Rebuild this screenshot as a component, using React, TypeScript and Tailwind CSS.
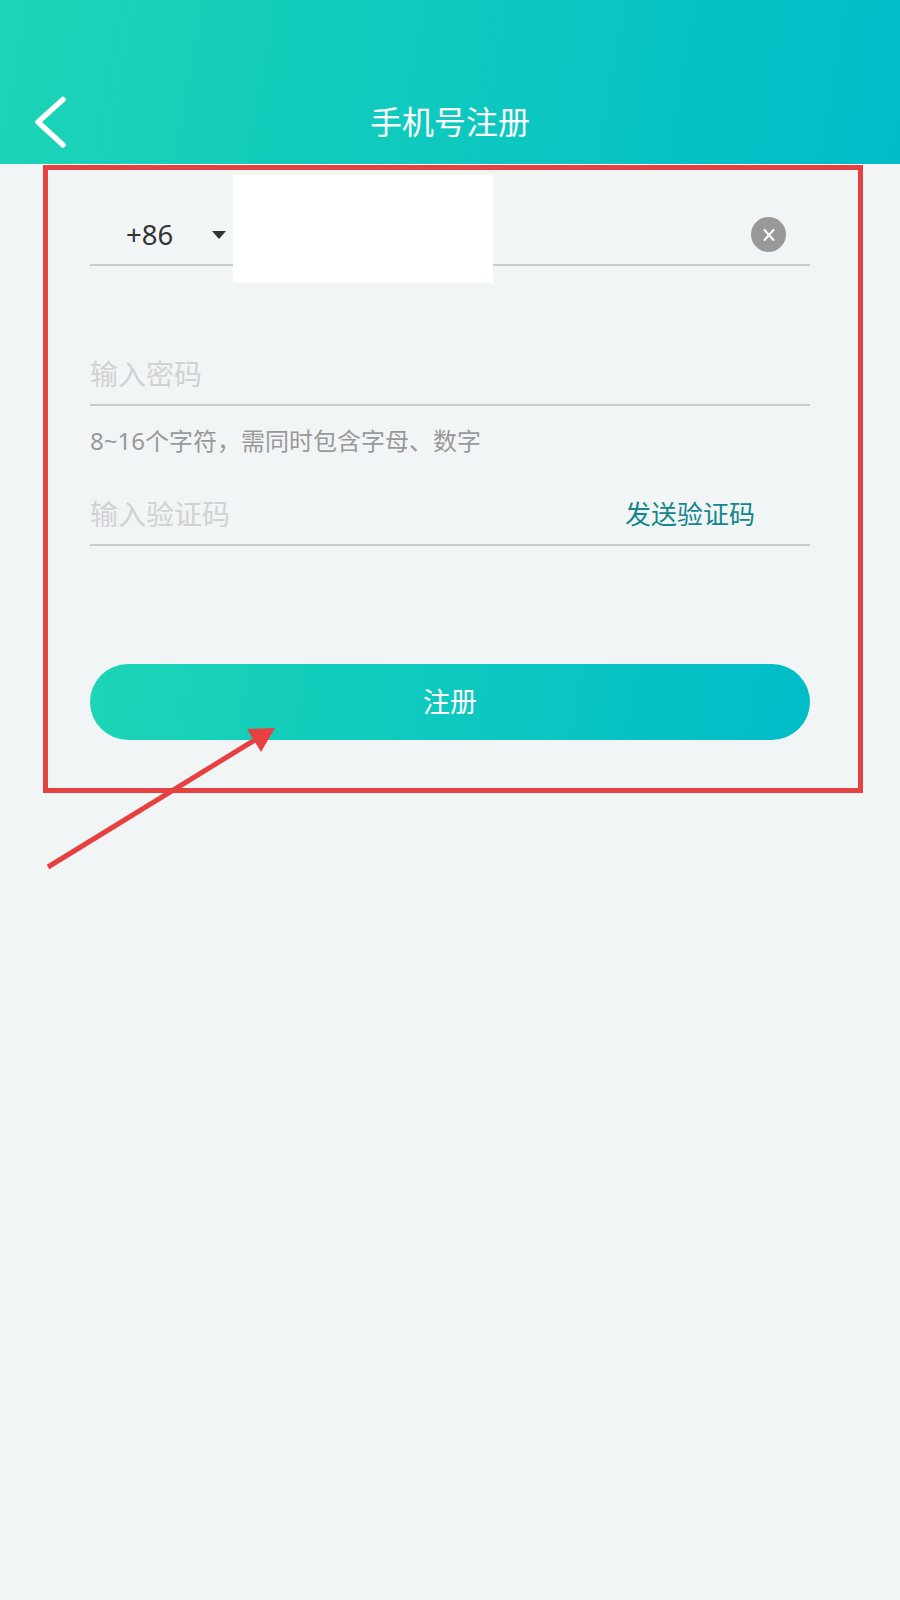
function Field({ children, className }: { children: React.ReactNode; className: string }) {
  return <div className={`flex items-center border-b-2 border-[#c9cbce] h-[68px] ${className}`}>{children}</div>;
}

export default function App() {
  return (
    <div className="relative min-h-[1600px] w-full overflow-hidden bg-[#f1f5f6] font-['Noto_Sans','Noto_Sans_CJK_SC',sans-serif]">
      {/* header */}
      <header className="grid grid-cols-[1fr_auto_1fr] items-center h-[164px] pt-[80px] pl-[34px] bg-[linear-gradient(100deg,#1cd5b6,#00bcc8)] text-white">
        <svg width="32" height="54" viewBox="0 0 32 54" fill="none" stroke="white" strokeWidth="5.5" strokeLinecap="round" strokeLinejoin="round">
          <path d="M29 4.5 L4 27 L29 50" />
        </svg>
        <h1 className="text-[32px] leading-none font-normal -ml-[34px]">手机号注册</h1>
        <div />
      </header>

      {/* form */}
      <main className="flex flex-col px-[90px] pt-[34px]">
        <Field className="pt-1.5 pl-[36px] pr-[24px]">
          <span className="mt-[2px] text-[27.5px] text-[#333333]">+86</span>
          <span className="ml-[39px] mt-[1px] w-0 h-0 border-x-[7px] border-x-transparent border-t-[8px] border-t-[#333333]" />
          <span className="ml-auto mt-[1px] flex items-center justify-center w-[35px] h-[35px] rounded-full bg-[#999999]">
            <svg width="14" height="14" viewBox="0 0 14 14" fill="none" stroke="white" strokeWidth="2" strokeLinecap="round">
              <path d="M2.5 2 L11.5 12 M11.5 2 L2.5 12" />
            </svg>
          </span>
        </Field>
        <Field className="mt-[72px] pt-1.5">
          <span className="text-[28px] text-[#d0d2d4]">输入密码</span>
        </Field>
        <div className="flex items-center h-[72px] pb-[2px] text-[24px] text-[#999999]">8~16个字符，需同时包含字母、数字</div>
        <Field className="justify-between pt-1.5 pr-[55px]">
          <span className="text-[28px] text-[#d0d2d4]">输入验证码</span>
          <span className="text-[26px] text-[#14868c]">发送验证码</span>
        </Field>
        <button className="flex items-center justify-center mt-[118px] h-[76px] rounded-full bg-[linear-gradient(100deg,#1cd5b6,#00bcc8)] text-[27px] text-white">
          注册
        </button>
      </main>

      {/* redaction and annotation marks laid over the screenshot */}
      <div className="absolute left-[233px] top-[175px] w-[260px] h-[108px] bg-white" />
      <div className="absolute left-[43px] top-[165px] w-[820px] h-[628px] border-[5px] border-[#e64040]" />
      <svg className="absolute left-0 top-0" width="900" height="900" viewBox="0 0 900 900" fill="none">
        <path d="M48 867 L258 738" stroke="#e64040" strokeWidth="5" />
        <path d="M247 729 L275 728 L261 752 Z" fill="#e64040" />
      </svg>
    </div>
  );
}
